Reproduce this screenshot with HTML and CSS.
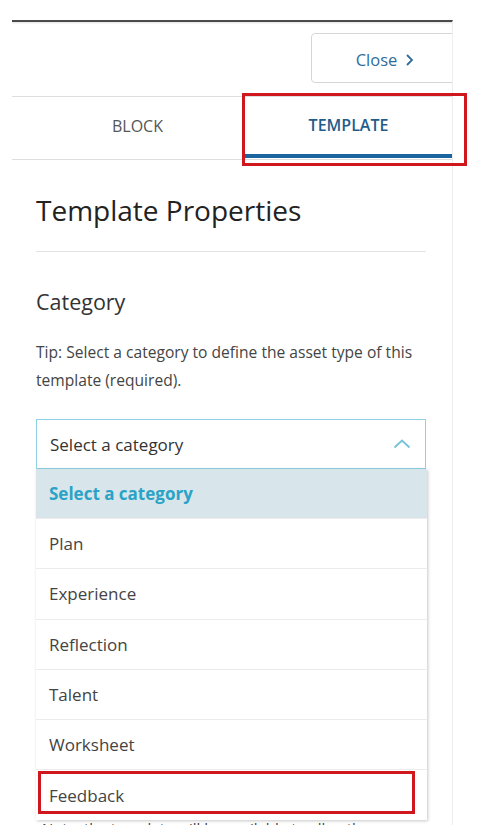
FILE: index.html
```html
<!DOCTYPE html>
<html lang="en">
<head>
<meta charset="utf-8">
<title>Template Properties</title>
<link rel="stylesheet" href="styles.css">
</head>
<body>
<div class="panel">
  <div class="panel-header">
    <button class="close-btn" type="button">Close
      <svg class="close-chev" width="9" height="14" viewBox="0 0 9 14"><polyline points="2,2 7,7 2,12" fill="none" stroke="currentColor" stroke-width="1.8"/></svg>
    </button>
  </div>
  <div class="tabs">
    <div class="tab tab-block">BLOCK</div>
    <div class="tab tab-active">TEMPLATE</div>
  </div>
  <div class="content">
    <h1 class="title">Template Properties</h1>
    <h2 class="section">Category</h2>
    <p class="tip">Tip: Select a category to define the asset type of this template (required).</p>
    <div class="select-wrap">
      <div class="select">
        <span>Select a category</span>
        <svg class="chev-up" width="18" height="10" viewBox="0 0 18 10"><polyline points="1.5,8.5 9,1.5 16.5,8.5" fill="none" stroke="currentColor" stroke-width="2"/></svg>
      </div>
      <ul class="dropdown">
        <li class="opt opt-active">Select a category</li>
        <li class="opt">Plan</li>
        <li class="opt">Experience</li>
        <li class="opt">Reflection</li>
        <li class="opt">Talent</li>
        <li class="opt">Worksheet</li>
        <li class="opt">Feedback</li>
      </ul>
    </div>
    <p class="note">Note: the template will be available to all authors once it is published.</p>
  </div>
</div>
<div class="mark mark-tab"></div>
<div class="mark mark-feedback"></div>
</body>
</html>
```

FILE: styles.css
```css
* { box-sizing: border-box; }
html, body { margin: 0; padding: 0; background: #fff; }
body {
  position: relative;
  font-family: "Open Sans", "Liberation Sans", sans-serif;
  color: #333;
  width: 489px;
  height: 834px;
  overflow: hidden;
}
.panel {
  margin: 20px 0 0 12px;
  width: 441px;
  height: 805px;
  border-right: 1px solid #eeeeee;
  border-top: 2px solid #4a4a4a;
  box-shadow: inset 0 2px 2px -1px rgba(0,0,0,0.12);
  overflow: hidden;
}
.panel-header {
  padding: 11px 0 0 299px;
  height: 74px;
}
.close-btn {
  width: 148px;
  height: 50px;
  border: 1px solid #d6d6d6;
  border-radius: 4px;
  background: #fff;
  font-family: "Open Sans", "Liberation Sans", sans-serif;
  font-size: 16.5px;
  color: #2e6d9c;
  display: flex;
  align-items: center;
  justify-content: center;
  gap: 8px;
  padding: 2px 0 0 0;
}
.close-chev { display: block; margin-top: 1px; }
.tabs {
  display: grid;
  grid-template-columns: 233px 207px;
  border-top: 1px solid #dedede;
  border-bottom: 1px solid #dedede;
  height: 64px;
}
.tab {
  display: flex;
  align-items: center;
  justify-content: center;
  font-size: 16px;
  padding-bottom: 5px;
}
.tab-block { color: #555; padding-left: 18px; }
.tab-active {
  color: #1f5d8c;
  font-weight: 600;
  border-bottom: 4px solid #1a64a0;
  margin-bottom: 1px;
  padding-bottom: 1px;
}
.content { padding: 0 26px 0 24px; }
.title {
  margin: 31px 0 0;
  padding-bottom: 22px;
  border-bottom: 1px solid #e3e3e3;
  font-size: 28px;
  font-weight: 400;
  color: #222;
  line-height: 38px;
}
.section {
  margin: 35px 0 0;
  font-size: 21.5px;
  font-weight: 400;
  color: #333;
  line-height: 29px;
}
.tip {
  margin: 22px 0 0;
  font-size: 15.6px;
  line-height: 28px;
  color: #444;
}
.select-wrap { position: relative; margin-top: 25px; }
.select {
  height: 50px;
  border: 1px solid #8fd0e2;
  padding: 0 13px 0 13px;
  display: flex;
  align-items: center;
  justify-content: space-between;
  font-size: 17px;
  color: #333;
}
.chev-up { color: #7ac4da; margin-right: 1px; }
.dropdown {
  position: absolute;
  top: 100%;
  left: 0;
  width: 391px;
  margin: 0;
  padding: 0;
  list-style: none;
  background: #fff;
  box-shadow: 1px 1px 3px rgba(0,0,0,0.22);
  z-index: 2;
}
.opt {
  height: 50.3px;
  display: flex;
  align-items: center;
  padding-left: 13px;
  font-size: 17px;
  color: #444;
  border-top: 1px solid #ececec;
}
.opt-active {
  border-top: 0;
  height: 49px;
  background: #d8e5eb;
  color: #2aa3c6;
  font-weight: 700;
}
.note {
  margin: 345px 0 0 6px;
  font-size: 15px;
  line-height: 28px;
  color: #444;
}
.mark {
  position: absolute;
  border: 3px solid #d0171e;
  pointer-events: none;
  z-index: 10;
}
.mark-tab { left: 242px; top: 93px; width: 225px; height: 73px; }
.mark-feedback { left: 38px; top: 771px; width: 377px; height: 43px; }
```
